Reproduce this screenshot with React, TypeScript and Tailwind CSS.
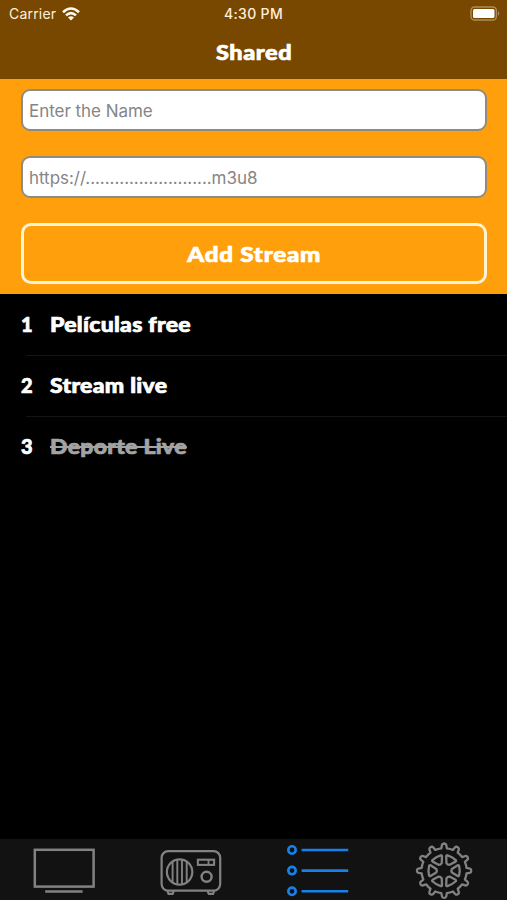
import React from 'react';
import { clsx } from 'clsx';

interface Stream {
  id: number;
  name: string;
  disabled?: boolean;
}

const streams: Stream[] = [
  { id: 1, name: 'Películas free' },
  { id: 2, name: 'Stream live' },
  { id: 3, name: 'Deporte Live', disabled: true },
];

const point = (r: number, deg: number) => {
  const a = (deg * Math.PI) / 180;
  return `${(r * Math.cos(a)).toFixed(2)} ${(r * Math.sin(a)).toFixed(2)}`;
};

// 12 rounded teeth
const gearPath =
  Array.from({ length: 12 }, (_, i) => {
    const c = i * 30;
    const start = i === 0 ? `M${point(22.6, c - 7)}` : `A22.6 22.6 0 0 1 ${point(22.6, c - 7)}`;
    return `${start}L${point(25.8, c - 4.8)}Q${point(27.2, c - 4)} ${point(27.2, c)}Q${point(27.2, c + 4)} ${point(25.8, c + 4.8)}L${point(22.6, c + 7)}`;
  }).join('') + `A22.6 22.6 0 0 1 ${point(22.6, -7)}Z`;

const WifiIcon = () => (
  <svg width="18" height="14" viewBox="0 0 18 14" fill="none" stroke="#fff8ee" strokeWidth="2.6">
    <path d="M1 5.2Q9-2.2 17 5.2" />
    <path d="M4 8.4Q9 3.8 14 8.4" />
    <path d="M6 10.5Q9 8 12 10.5L9 13.6Z" fill="#fff8ee" stroke="none" />
  </svg>
);

const BatteryIcon = () => (
  <svg width="31" height="15" viewBox="0 0 31 15">
    <rect x="1" y="1" width="25.4" height="13" rx="3.6" fill="none" stroke="#ad8c5e" strokeWidth="1.4" />
    <rect x="3" y="3" width="21.5" height="9" rx="1.5" fill="#fff" />
    <path d="M28 5Q30.4 7.5 28 10Z" fill="#ad8c5e" />
  </svg>
);

const TvIcon = () => (
  <svg width="64" height="61" viewBox="0 0 64 61" fill="none" stroke="#828282" strokeWidth="2.5">
    <rect x="3.8" y="10.8" width="58.8" height="36.8" />
    <path d="M14.2 52.5H51.6" strokeWidth="2.6" />
  </svg>
);

const RadioIcon = () => (
  <svg width="64" height="61" viewBox="0 0 64 61" fill="none" stroke="#828282" strokeWidth="2.2">
    <rect x="3.6" y="12.2" width="58.6" height="39.4" rx="6.5" />
    <circle cx="21.6" cy="33" r="12.7" />
    <path d="M14.6 22.5V43.5M19.3 21V45M24 21V45M28.7 22.5V43.5" strokeWidth="1.9" />
    <rect x="39.9" y="20.7" width="16.2" height="5.2" strokeWidth="2.1" />
    <path d="M50.5 20V26" strokeWidth="1.8" />
    <circle cx="48.6" cy="37.8" r="5" strokeWidth="2.4" />
    <path d="M9.4 52L10.6 54.9H14.6L15.8 52M49.6 52L50.8 54.9H55L56.2 52" />
  </svg>
);

const ListIcon = () => (
  <svg width="64" height="61" viewBox="0 0 64 61" fill="none" stroke="#1681ea" strokeWidth="2.6">
    {[11, 31.6, 52.3].map((y) => (
      <g key={y}>
        <circle cx="7" cy={y} r="3.7" />
        <path d={`M16.6 ${y}H63.2`} />
      </g>
    ))}
  </svg>
);

const GearIcon = () => (
  <svg width="64" height="61" viewBox="0 0 64 61" fill="none" stroke="#828282" strokeWidth="2.3" strokeLinejoin="round">
    <g transform="translate(32.1 31.7)">
      <path d={gearPath} />
      {[0, 60, 120, 180, 240, 300].map((deg) => (
        <path key={deg} transform={`rotate(${deg})`} d="M7.8-1.8L13.6-5.4Q14.7-5.8 15-4.8Q16.2 0 15 4.8Q14.7 5.8 13.6 5.4L7.8 1.8Q6.8 0 7.8-1.8Z" />
      ))}
    </g>
  </svg>
);

const tabs = [
  { label: 'TV', Icon: TvIcon },
  { label: 'Radio', Icon: RadioIcon },
  { label: 'Shared', Icon: ListIcon },
  { label: 'Settings', Icon: GearIcon },
];

const inputClass =
  "block h-[42px] w-full rounded-[9px] border-2 border-[#8f8b84] bg-white px-[6px] pt-px font-['Inter',sans-serif] text-[17px] tracking-[-0.04px] text-black placeholder:text-[#858585] placeholder:opacity-100 outline-none";

export default function App() {
  return (
    <div className="flex h-[900px] w-[507px] flex-col overflow-hidden bg-black font-['Lato',sans-serif] text-white">
      <header className="h-[79px] shrink-0 bg-[#784800]">
        <div className="grid h-[27px] grid-cols-3 items-center font-['Inter',sans-serif] text-[14px] text-[#fff0dc]">
          <div className="flex items-center gap-[6px] pl-[9px]">
            <span className="tracking-[0.2px]">Carrier</span>
            <WifiIcon />
          </div>
          <span className="text-center font-medium tracking-[0.35px]">4:30 PM</span>
          <div className="flex justify-end pr-[6px]">
            <BatteryIcon />
          </div>
        </div>
        <h1 className="scale-x-[1.12] pt-[10px] pl-px text-center text-[21px] leading-[30px] font-black tracking-[0.5px] [-webkit-text-stroke:0.7px]">
          Shared
        </h1>
      </header>

      <section className="h-[215px] shrink-0 bg-[#ff9f0c] pt-[10px] pr-5 pl-[21px]">
        <input className={inputClass} placeholder="Enter the Name" />
        <input className={clsx(inputClass, 'mt-[25px]')} placeholder="https://..........................m3u8" />
        <button className="mt-[25px] block h-[61px] w-full rounded-[10px] border-3 border-[#fff3d2]">
          <span className="inline-block scale-x-[1.15] pl-px text-[21px] font-black tracking-[0.65px] [-webkit-text-stroke:0.7px]">
            Add Stream
          </span>
        </button>
      </section>

      <ul className="flex-1">
        {streams.map((stream, i) => (
          <li key={stream.id} className="h-[61px]">
            <div className="flex h-[61px] items-center pb-0.5 text-[20px] font-black [-webkit-text-stroke:0.7px]">
              <span className="w-[50px] pl-[21px]">{stream.id}</span>
              <span
                className={clsx(
                  'inline-block origin-left scale-x-[1.15] tracking-[0.25px]',
                  stream.disabled && 'text-[#a3a3a3] line-through decoration-2'
                )}
              >
                {stream.name}
              </span>
            </div>
            <div className={clsx('ml-[26px] h-px', i < streams.length - 1 && 'bg-[#141414]')} />
          </li>
        ))}
      </ul>

      <nav className="grid h-[61px] shrink-0 grid-cols-4 bg-[#121212]">
        {tabs.map(({ label, Icon }) => (
          <button key={label} aria-label={label} className="flex justify-center">
            <Icon />
          </button>
        ))}
      </nav>
    </div>
  );
}
